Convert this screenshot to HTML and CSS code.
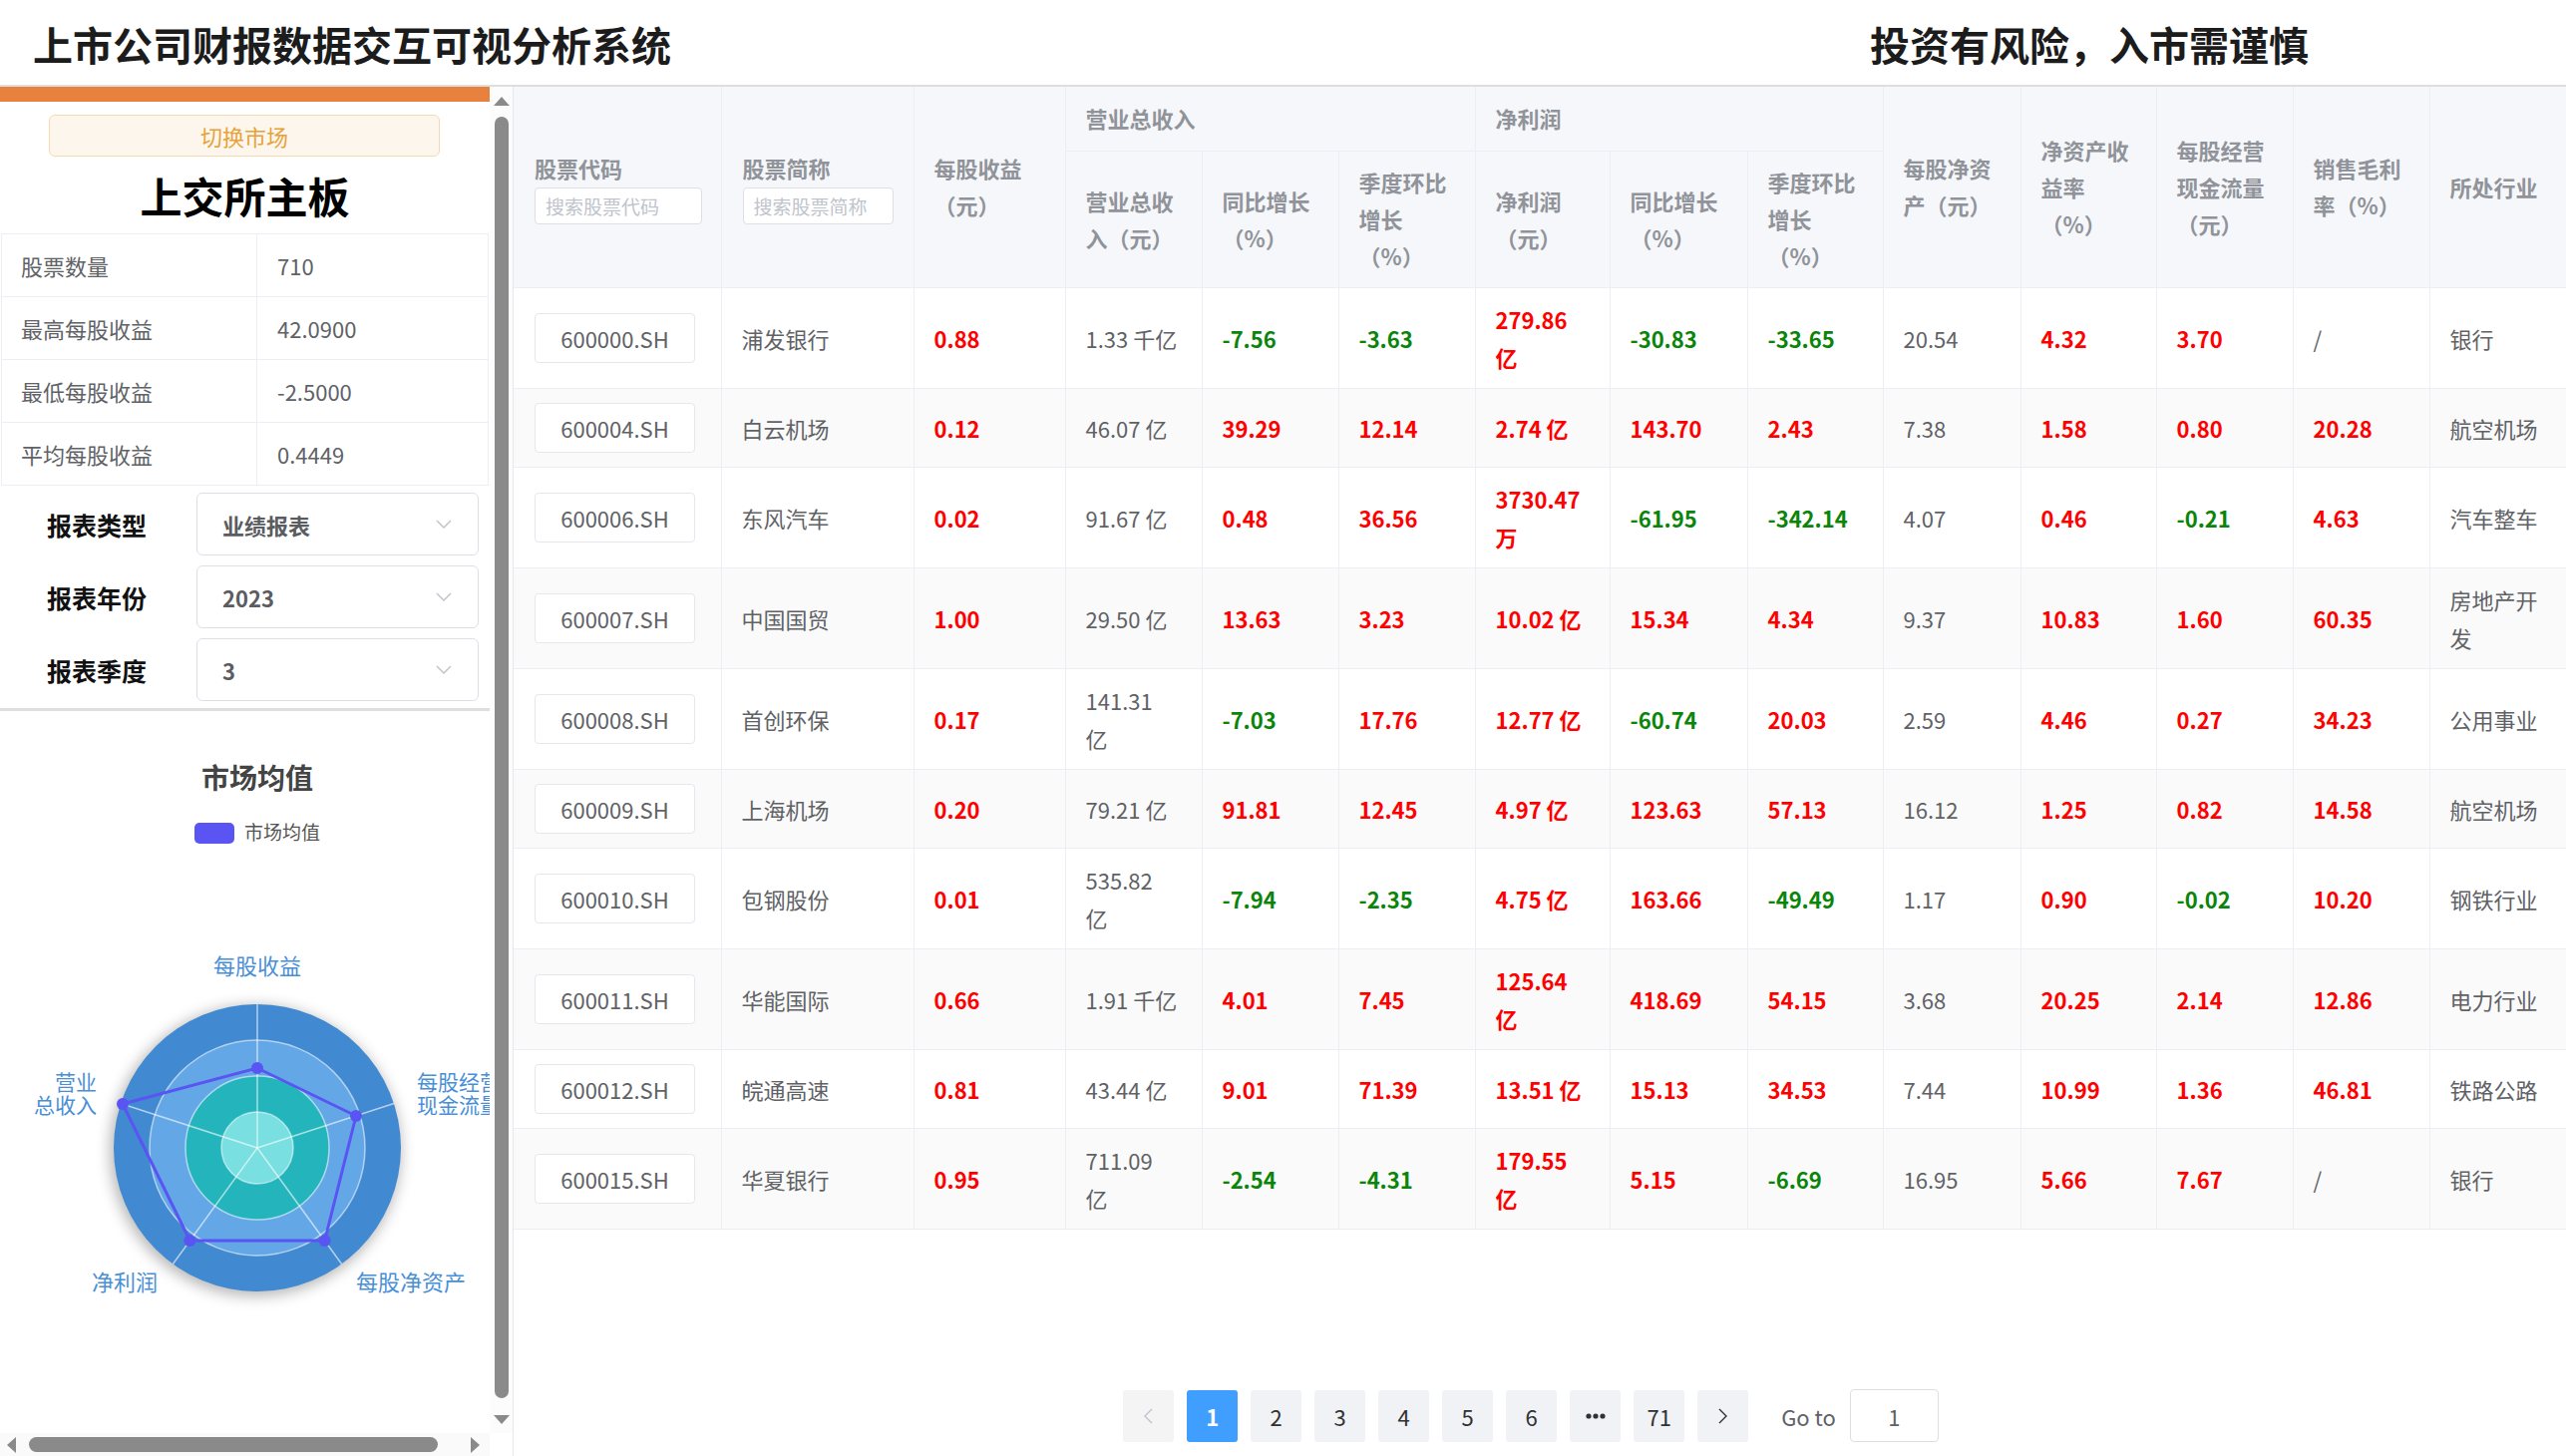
FILE: index.html
```html
<!DOCTYPE html>
<html lang="zh-CN">
<head>
<meta charset="utf-8">
<title>上市公司财报数据交互可视分析系统</title>
<link rel="stylesheet" href="styles.css">
</head>
<body>
<header class="topbar">
  <h1 class="app-title">上市公司财报数据交互可视分析系统</h1>
  <div class="warning">投资有风险，入市需谨慎</div>
</header>
<div class="layout">
  <aside class="side">
    <div class="side-row">
      <div class="side-content">
        <div class="orange-bar"></div>
        <button class="switch-btn">切换市场</button>
        <h2 class="market-title">上交所主板</h2>
        <table class="stats">
          <tr><td class="k">股票数量</td><td class="v">710</td></tr>
          <tr><td class="k">最高每股收益</td><td class="v">42.0900</td></tr>
          <tr><td class="k">最低每股收益</td><td class="v">-2.5000</td></tr>
          <tr><td class="k">平均每股收益</td><td class="v">0.4449</td></tr>
        </table>
        <div class="filters">
          <div class="filter"><span class="filter-label">报表类型</span><div class="select"><span>业绩报表</span><svg class="chev" width="16" height="9" viewBox="0 0 16 9"><polyline points="1,1 8,8 15,1" fill="none" stroke="#c0c4cc" stroke-width="1.5"/></svg></div></div>
          <div class="filter"><span class="filter-label">报表年份</span><div class="select"><span>2023</span><svg class="chev" width="16" height="9" viewBox="0 0 16 9"><polyline points="1,1 8,8 15,1" fill="none" stroke="#c0c4cc" stroke-width="1.5"/></svg></div></div>
          <div class="filter"><span class="filter-label">报表季度</span><div class="select"><span>3</span><svg class="chev" width="16" height="9" viewBox="0 0 16 9"><polyline points="1,1 8,8 15,1" fill="none" stroke="#c0c4cc" stroke-width="1.5"/></svg></div></div>
        </div>
        <svg class="radar" width="491" height="724" viewBox="0 0 491 724">
          <defs>
            <filter id="glow" x="-30%" y="-30%" width="160%" height="160%"><feGaussianBlur stdDeviation="7"/></filter>
          </defs>
          <text x="258" y="78" text-anchor="middle" class="ch-title">市场均值</text>
          <rect x="195" y="112" width="40" height="21" rx="5" fill="#5a55f2"/>
          <text x="245" y="129" class="ch-legend">市场均值</text>
          <circle cx="256" cy="441" r="146" fill="rgba(0,0,0,0.28)" filter="url(#glow)"/>
          <circle cx="258" cy="438" r="144" fill="#4189d1"/>
          <circle cx="258" cy="438" r="108" fill="#63a7e6" stroke="rgba(255,255,255,0.55)" stroke-width="1.5"/>
          <circle cx="258" cy="438" r="72" fill="#24b5bc" stroke="rgba(255,255,255,0.55)" stroke-width="1.5"/>
          <circle cx="258" cy="438" r="36" fill="#7adfe0" stroke="rgba(255,255,255,0.55)" stroke-width="1.5"/>
          <g stroke="rgba(255,255,255,0.6)" stroke-width="1.5">
            <line x1="258" y1="438" x2="258" y2="294"/>
            <line x1="258" y1="438" x2="395" y2="393.5"/>
            <line x1="258" y1="438" x2="342.6" y2="554.5"/>
            <line x1="258" y1="438" x2="173.4" y2="554.5"/>
            <line x1="258" y1="438" x2="121" y2="393.5"/>
          </g>
          <polygon points="258,358 357,406 325.6,531 190.4,531 123,394" fill="none" stroke="#5a55f2" stroke-width="3" stroke-linejoin="round"/>
          <g fill="#5a55f2">
            <circle cx="258" cy="358" r="6"/>
            <circle cx="357" cy="406" r="6"/>
            <circle cx="325.6" cy="531" r="6"/>
            <circle cx="190.4" cy="531" r="6"/>
            <circle cx="123" cy="394" r="6"/>
          </g>
          <g class="ch-label">
            <text x="258" y="264" text-anchor="middle">每股收益</text>
            <text x="97" y="380" text-anchor="end" class="sm">营业</text>
            <text x="97" y="403" text-anchor="end" class="sm">总收入</text>
            <text x="418" y="380" class="sm">每股经营</text>
            <text x="418" y="403" class="sm">现金流量</text>
            <text x="125" y="581" text-anchor="middle">净利润</text>
            <text x="357" y="581">每股净资产</text>
          </g>
        </svg>
      </div>
      <div class="vscroll">
        <span class="arr-up"></span>
        <span class="vthumb"></span>
        <span class="arr-down"></span>
      </div>
    </div>
    <div class="hscroll">
      <span class="arr-left"></span>
      <span class="hthumb"></span>
      <span class="arr-right"></span>
    </div>
  </aside>

  <main class="main">
    <table class="data">
      <colgroup>
        <col style="width:208px"><col style="width:193px"><col style="width:152px">
        <col style="width:137px"><col style="width:137px"><col style="width:137px">
        <col style="width:135px"><col style="width:138px"><col style="width:136px">
        <col style="width:138px"><col style="width:136px"><col style="width:137px">
        <col style="width:137px"><col style="width:137px">
      </colgroup>
      <thead>
        <tr class="h-group">
          <th rowspan="2" class="with-search"><div class="th-label">股票代码</div><input class="th-search code-search" placeholder="搜索股票代码"></th>
          <th rowspan="2" class="with-search"><div class="th-label">股票简称</div><input class="th-search name-search" placeholder="搜索股票简称"></th>
          <th rowspan="2">每股收益<br>（元）</th>
          <th colspan="3">营业总收入</th>
          <th colspan="3">净利润</th>
          <th rowspan="2">每股净资<br>产（元）</th>
          <th rowspan="2">净资产收<br>益率<br>（%）</th>
          <th rowspan="2">每股经营<br>现金流量<br>（元）</th>
          <th rowspan="2">销售毛利<br>率（%）</th>
          <th rowspan="2">所处行业</th>
        </tr>
        <tr class="h-sub">
          <th>营业总收<br>入（元）</th>
          <th>同比增长<br>（%）</th>
          <th>季度环比<br>增长<br>（%）</th>
          <th>净利润<br>（元）</th>
          <th>同比增长<br>（%）</th>
          <th>季度环比<br>增长<br>（%）</th>
        </tr>
      </thead>
      <tbody>
        <tr>
          <td><div class="code">600000.SH</div></td><td>浦发银行</td><td class="r">0.88</td>
          <td>1.33 千亿</td><td class="g">-7.56</td><td class="g">-3.63</td>
          <td class="r">279.86<br>亿</td><td class="g">-30.83</td><td class="g">-33.65</td>
          <td>20.54</td><td class="r">4.32</td><td class="r">3.70</td><td>/</td><td>银行</td>
        </tr>
        <tr>
          <td><div class="code">600004.SH</div></td><td>白云机场</td><td class="r">0.12</td>
          <td>46.07 亿</td><td class="r">39.29</td><td class="r">12.14</td>
          <td class="r">2.74 亿</td><td class="r">143.70</td><td class="r">2.43</td>
          <td>7.38</td><td class="r">1.58</td><td class="r">0.80</td><td class="r">20.28</td><td>航空机场</td>
        </tr>
        <tr>
          <td><div class="code">600006.SH</div></td><td>东风汽车</td><td class="r">0.02</td>
          <td>91.67 亿</td><td class="r">0.48</td><td class="r">36.56</td>
          <td class="r">3730.47<br>万</td><td class="g">-61.95</td><td class="g">-342.14</td>
          <td>4.07</td><td class="r">0.46</td><td class="g">-0.21</td><td class="r">4.63</td><td>汽车整车</td>
        </tr>
        <tr>
          <td><div class="code">600007.SH</div></td><td>中国国贸</td><td class="r">1.00</td>
          <td>29.50 亿</td><td class="r">13.63</td><td class="r">3.23</td>
          <td class="r">10.02 亿</td><td class="r">15.34</td><td class="r">4.34</td>
          <td>9.37</td><td class="r">10.83</td><td class="r">1.60</td><td class="r">60.35</td><td>房地产开<br>发</td>
        </tr>
        <tr>
          <td><div class="code">600008.SH</div></td><td>首创环保</td><td class="r">0.17</td>
          <td>141.31<br>亿</td><td class="g">-7.03</td><td class="r">17.76</td>
          <td class="r">12.77 亿</td><td class="g">-60.74</td><td class="r">20.03</td>
          <td>2.59</td><td class="r">4.46</td><td class="r">0.27</td><td class="r">34.23</td><td>公用事业</td>
        </tr>
        <tr>
          <td><div class="code">600009.SH</div></td><td>上海机场</td><td class="r">0.20</td>
          <td>79.21 亿</td><td class="r">91.81</td><td class="r">12.45</td>
          <td class="r">4.97 亿</td><td class="r">123.63</td><td class="r">57.13</td>
          <td>16.12</td><td class="r">1.25</td><td class="r">0.82</td><td class="r">14.58</td><td>航空机场</td>
        </tr>
        <tr>
          <td><div class="code">600010.SH</div></td><td>包钢股份</td><td class="r">0.01</td>
          <td>535.82<br>亿</td><td class="g">-7.94</td><td class="g">-2.35</td>
          <td class="r">4.75 亿</td><td class="r">163.66</td><td class="g">-49.49</td>
          <td>1.17</td><td class="r">0.90</td><td class="g">-0.02</td><td class="r">10.20</td><td>钢铁行业</td>
        </tr>
        <tr>
          <td><div class="code">600011.SH</div></td><td>华能国际</td><td class="r">0.66</td>
          <td>1.91 千亿</td><td class="r">4.01</td><td class="r">7.45</td>
          <td class="r">125.64<br>亿</td><td class="r">418.69</td><td class="r">54.15</td>
          <td>3.68</td><td class="r">20.25</td><td class="r">2.14</td><td class="r">12.86</td><td>电力行业</td>
        </tr>
        <tr>
          <td><div class="code">600012.SH</div></td><td>皖通高速</td><td class="r">0.81</td>
          <td>43.44 亿</td><td class="r">9.01</td><td class="r">71.39</td>
          <td class="r">13.51 亿</td><td class="r">15.13</td><td class="r">34.53</td>
          <td>7.44</td><td class="r">10.99</td><td class="r">1.36</td><td class="r">46.81</td><td>铁路公路</td>
        </tr>
        <tr>
          <td><div class="code">600015.SH</div></td><td>华夏银行</td><td class="r">0.95</td>
          <td>711.09<br>亿</td><td class="g">-2.54</td><td class="g">-4.31</td>
          <td class="r">179.55<br>亿</td><td class="r">5.15</td><td class="g">-6.69</td>
          <td>16.95</td><td class="r">5.66</td><td class="r">7.67</td><td>/</td><td>银行</td>
        </tr>
      </tbody>
    </table>

    <div class="pager">
      <button class="pg prev"><svg width="9" height="16" viewBox="0 0 9 16"><polyline points="8,1 1,8 8,15" fill="none" stroke="#c0c4cc" stroke-width="1.4"/></svg></button>
      <button class="pg active">1</button>
      <button class="pg">2</button>
      <button class="pg">3</button>
      <button class="pg">4</button>
      <button class="pg">5</button>
      <button class="pg">6</button>
      <button class="pg more" aria-label="more"><svg width="20" height="6" viewBox="0 0 20 6"><g fill="#303133"><circle cx="3" cy="3" r="2.6"/><circle cx="10" cy="3" r="2.6"/><circle cx="17" cy="3" r="2.6"/></g></svg></button>
      <button class="pg">71</button>
      <button class="pg next"><svg width="9" height="16" viewBox="0 0 9 16"><polyline points="1,1 8,8 1,15" fill="none" stroke="#303133" stroke-width="1.4"/></svg></button>
      <span class="goto">Go to</span>
      <input class="goto-input" value="1">
    </div>
  </main>
</div>
</body>
</html>
```
FILE: styles.css
```css
* { box-sizing: border-box; }
html, body { margin: 0; padding: 0; }
body {
  width: 2573px;
  height: 1460px;
  overflow: hidden;
  background: #fff;
  color: #606266;
  font-family: "Noto Sans CJK SC", "Noto Sans", sans-serif;
}

/* top bar */
.topbar {
  height: 87px;
  display: flex;
  align-items: center;
  justify-content: space-between;
  padding: 2px 258px 0 33px;
  border-bottom: 2px solid #dedede;
}
.app-title {
  margin: 0;
  font-size: 40px;
  font-weight: 700;
  line-height: 1;
  color: #1c1c1c;
}
.warning {
  font-size: 40px;
  font-weight: 700;
  line-height: 1;
  color: #1c1c1c;
}

.layout {
  display: flex;
  height: 1373px;
}

/* side panel */
.side {
  width: 515px;
  flex: none;
  display: flex;
  flex-direction: column;
  border-right: 1px solid #e6e8ec;
}
.side-row {
  flex: 1;
  display: flex;
  min-height: 0;
}
.side-content {
  width: 491px;
  overflow: hidden;
}
.orange-bar {
  height: 15px;
  background: #e8803e;
}
.switch-btn {
  display: block;
  width: 392px;
  height: 42px;
  margin: 13px 0 0 49px;
  background: #fdf6ec;
  border: 1px solid #f5dab1;
  border-radius: 6px;
  color: #e6a23c;
  font-family: inherit;
  font-size: 22px;
  line-height: 1;
  padding: 0;
}
.market-title {
  margin: 0;
  font-size: 42px;
  font-weight: 700;
  line-height: 77px;
  text-align: center;
  color: #000;
}
.stats {
  width: 489px;
  margin-left: 1px;
  border-collapse: collapse;
  font-size: 22px;
  color: #606266;
}
.stats td {
  height: 63px;
  border: 1px solid #ebeef5;
  padding: 0 0 0 19px;
}
.stats .k { width: 256px; }
.stats .v { padding-left: 20px; }

.filters {
  margin-top: 7px;
  padding-bottom: 7px;
  border-bottom: 3px solid #dedede;
  display: flex;
  flex-direction: column;
  gap: 10px;
}
.filter {
  display: flex;
  align-items: center;
  height: 63px;
}
.filter-label {
  width: 197px;
  padding-left: 47px;
  font-size: 25px;
  font-weight: 700;
  color: #111;
}
.select {
  width: 283px;
  height: 63px;
  border: 1px solid #dcdfe6;
  border-radius: 6px;
  display: flex;
  align-items: center;
  justify-content: space-between;
  padding: 0 26px 0 25px;
  font-size: 22px;
  font-weight: 700;
  color: #5a5c61;
}
.radar {
  display: block;
}
.ch-title {
  font-size: 28px;
  font-weight: 700;
  fill: #444;
  font-family: "Noto Sans CJK SC", sans-serif;
}
.ch-legend {
  font-size: 19px;
  fill: #555;
  font-family: "Noto Sans CJK SC", sans-serif;
}
.ch-label text {
  font-size: 22px;
  fill: #4a8fd6;
  font-family: "Noto Sans CJK SC", sans-serif;
}
.ch-label text.sm {
  font-size: 21px;
}

/* scrollbars */
.vscroll {
  width: 23px;
  flex: none;
  display: flex;
  flex-direction: column;
  align-items: center;
  padding: 10px 0 9px;
  background: #fcfcfc;
}
.arr-up {
  width: 0; height: 0;
  border-left: 8px solid transparent;
  border-right: 8px solid transparent;
  border-bottom: 9px solid #8a8a8a;
}
.vthumb {
  flex: 1;
  width: 14px;
  margin: 11px 0 17px;
  border-radius: 7px;
  background: #8a8a8a;
}
.arr-down {
  width: 0; height: 0;
  border-left: 8px solid transparent;
  border-right: 8px solid transparent;
  border-top: 9px solid #8a8a8a;
}
.hscroll {
  height: 23px;
  width: 491px;
  display: flex;
  align-items: center;
  padding: 0 10px 0 7px;
  background: #fafafa;
}
.arr-left {
  width: 0; height: 0;
  border-top: 8px solid transparent;
  border-bottom: 8px solid transparent;
  border-right: 9px solid #8a8a8a;
}
.hthumb {
  width: 410px;
  height: 15px;
  margin-left: 13px;
  border-radius: 8px;
  background: #8a8a8a;
}
.arr-right {
  width: 0; height: 0;
  margin-left: auto;
  border-top: 8px solid transparent;
  border-bottom: 8px solid transparent;
  border-left: 9px solid #8a8a8a;
}

/* main table */
.main {
  flex: 1;
  min-width: 0;
  display: flex;
  flex-direction: column;
}
.data {
  width: 2058px;
  table-layout: fixed;
  border-collapse: collapse;
  font-size: 22px;
}
.data th {
  background: #f5f7fa;
  color: #909399;
  font-weight: 700;
  text-align: left;
  vertical-align: middle;
  line-height: 37px;
  padding: 0 10px 0 20px;
  border-right: 1px solid #ebeef5;
  border-bottom: 1px solid #ebeef5;
  white-space: nowrap;
}
.h-group { height: 64px; }
.h-sub { height: 137px; }
.data th.with-search { padding-left: 21px; }
.th-label { line-height: 37px; }
.th-search {
  display: block;
  height: 37px;
  margin-top: 1px;
  border: 1px solid #dcdfe6;
  border-radius: 4px;
  background: #fff;
  padding: 0 10px;
  font-family: inherit;
  font-size: 19px;
  color: #606266;
}
.th-search::placeholder { color: #c0c4cc; }
.code-search { width: 168px; }
.name-search { width: 151px; }

.data td {
  padding: 12px 10px 12px 20px;
  line-height: 38px;
  color: #606266;
  border-right: 1px solid #ebeef5;
  border-bottom: 1px solid #ebeef5;
  white-space: nowrap;
  vertical-align: middle;
}
.data tbody tr:nth-child(even) td { background: #fafafa; }
.data td.r { color: #f00; font-weight: 700; }
.data td.g { color: #0a850a; font-weight: 700; }
.code {
  width: 161px;
  height: 50px;
  margin: 2px 0 2px 1px;
  border: 1px solid #e4e7ed;
  border-radius: 4px;
  background: #fff;
  text-align: center;
  line-height: 48px;
  color: #606266;
}

/* pagination */
.pager {
  margin-top: auto;
  display: flex;
  justify-content: center;
  align-items: center;
  gap: 13px;
  padding: 0 18px 14px 0;
}
.pg {
  width: 51px;
  height: 52px;
  border: none;
  border-radius: 3px;
  background: #f0f2f5;
  color: #303133;
  font-family: inherit;
  font-size: 22px;
  padding: 0;
  display: flex;
  align-items: center;
  justify-content: center;
}
.pg.prev { background: #f4f4f5; }
.pg.active { background: #409eff; color: #fff; font-weight: 700; }
.goto {
  margin-left: 20px;
  font-size: 22px;
  color: #606266;
}
.goto-input {
  width: 89px;
  height: 53px;
  margin-left: 1px;
  border: 1px solid #dcdfe6;
  border-radius: 4px;
  text-align: center;
  font-family: inherit;
  font-size: 22px;
  color: #606266;
  padding: 0;
}
```
